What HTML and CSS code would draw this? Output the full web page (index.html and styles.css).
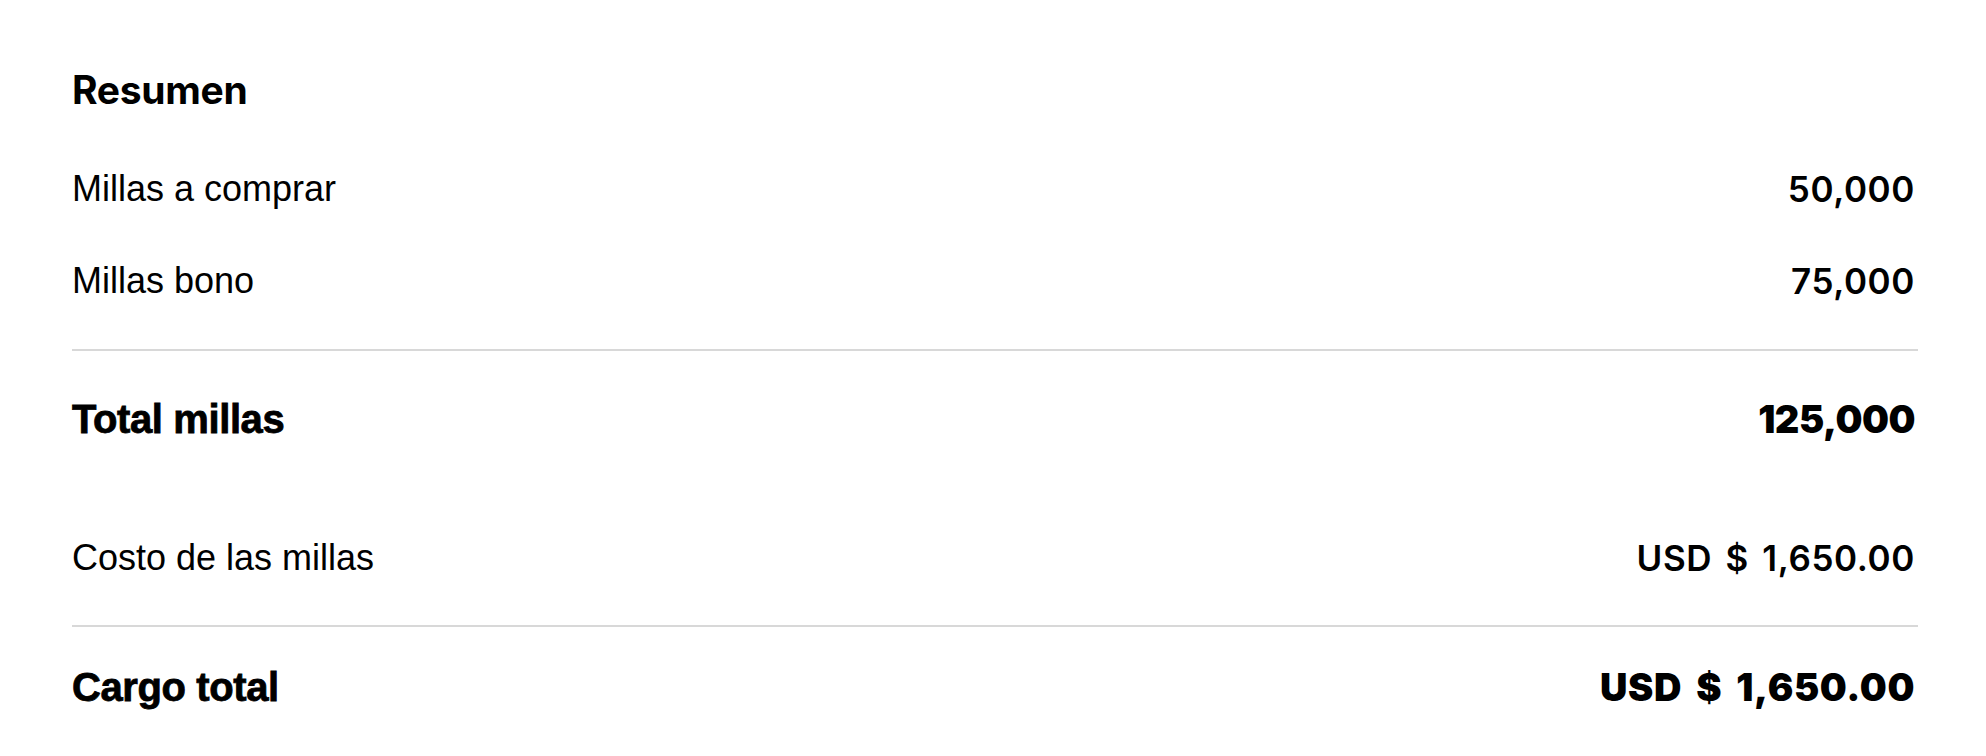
FILE: index.html
```html
<!DOCTYPE html>
<html lang="es">
<head>
<meta charset="utf-8">
<title>Resumen</title>
<link rel="stylesheet" href="styles.css">
</head>
<body>
<section class="summary">
  <h2 class="summary-title">Resumen</h2>
  <div class="row row-first">
    <span class="label">Millas a comprar</span>
    <span class="value">50,000</span>
  </div>
  <div class="row row-second">
    <span class="label">Millas bono</span>
    <span class="value">75,000</span>
  </div>
  <hr class="divider divider-first">
  <div class="row row-total">
    <span class="label label-strong">Total millas</span>
    <span class="value value-strong">125,000</span>
  </div>
  <div class="row row-cost">
    <span class="label">Costo de las millas</span>
    <span class="value">USD $ 1,650.00</span>
  </div>
  <hr class="divider divider-second">
  <div class="row row-charge">
    <span class="label label-strong">Cargo total</span>
    <span class="value value-strong value-money">USD $ 1,650.00</span>
  </div>
</section>
</body>
</html>
```
FILE: styles.css
```css
html, body {
  margin: 0;
  padding: 0;
  background: #ffffff;
}

body {
  font-family: "Liberation Sans", Arial, sans-serif;
  color: #000000;
}

.summary {
  padding: 60px 71px 0 72px;
  display: flex;
  flex-direction: column;
}

.summary-title {
  margin: 0;
  height: 60px;
  line-height: 60px;
  font-family: Inter, "Liberation Sans", sans-serif;
  font-size: 39px;
  font-weight: 700;
  letter-spacing: -0.3px;
}

.row {
  display: flex;
  justify-content: space-between;
  align-items: center;
  height: 60px;
  line-height: 60px;
}

.row-first { margin-top: 39px; }
.row-second { margin-top: 32px; }
.divider-first { margin-top: 38px; }
.row-total { margin-top: 38px; }
.row-cost { margin-top: 79px; }
.divider-second { margin-top: 37px; }
.row-charge { margin-top: 30px; }

.label {
  font-size: 36px;
  font-weight: 400;
}

.label-strong {
  font-size: 40px;
  font-weight: 700;
  letter-spacing: -0.4px;
  -webkit-text-stroke: 0.8px #000000;
}

.value {
  font-family: Inter, "Liberation Sans", sans-serif;
  font-size: 35px;
  font-weight: 600;
  letter-spacing: 0.6px;
  word-spacing: 4px;
}

.value-strong {
  font-size: 38px;
  font-weight: 900;
  letter-spacing: -0.5px;
  word-spacing: 0;
}

.value-money {
  letter-spacing: 0.6px;
  word-spacing: 6px;
}

.divider {
  border: 0;
  height: 2px;
  margin-bottom: 0;
  margin-left: 0;
  margin-right: -3px;
  background: #d8d8d8;
}
```
